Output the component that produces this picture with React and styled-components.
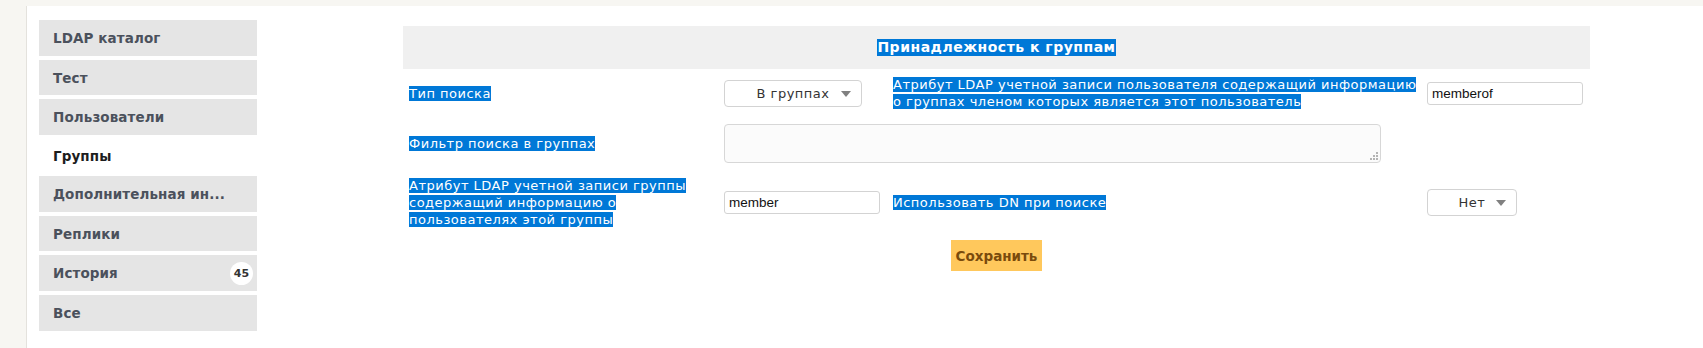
import styled, { createGlobalStyle } from "styled-components";

const GlobalStyle = createGlobalStyle`
  body {
    margin: 0;
    background: #f7f6f2;
    font-family: "DejaVu Sans", Verdana, sans-serif;
  }
`;

const Page = styled.div`
  padding: 6px 0 0 26px;
  min-height: 342px;
`;

const Panel = styled.div`
  display: flex;
  align-items: flex-start;
  background: #fff;
  border-left: 1px solid #e4e2dd;
  min-height: 342px;
  padding: 14px 0 0 12px;
  box-sizing: border-box;
`;

const Sidebar = styled.nav`
  width: 218px;
  display: flex;
  flex-direction: column;
  gap: 4px;
`;

const NavItem = styled.div`
  height: ${(p) => (p.$active ? "33px" : "35.7px")};
  display: flex;
  align-items: center;
  justify-content: space-between;
  padding: 0 4px 0 14px;
  background: ${(p) => (p.$active ? "transparent" : "#e5e5e5")};
  color: ${(p) => (p.$active ? "#1d1d1d" : "#4b515c")};
  font-weight: bold;
  font-size: 13.5px;
  letter-spacing: 0.1px;
  white-space: nowrap;
`;

const Badge = styled.span`
  width: 23px;
  height: 23px;
  border-radius: 50%;
  background: #fff;
  color: #333;
  font-size: 11px;
  font-weight: bold;
  letter-spacing: 0;
  display: flex;
  align-items: center;
  justify-content: center;
`;

const Main = styled.section`
  margin: 6px 0 0 146px;
  width: 1187px;
`;

const Header = styled.div`
  height: 43px;
  background: #f0f0f0;
  display: flex;
  align-items: center;
  justify-content: center;
  font-weight: bold;
  font-size: 14px;
  line-height: 17px;
  letter-spacing: 0.5px;
  color: #fff;
`;

const Form = styled.div`
  display: grid;
  grid-template-columns: 315px 169px 534px 169px;
  align-items: center;
`;

const Cell = styled.div`
  padding: 7px 6px;
  grid-column: ${(p) => p.$span || "auto"};
  display: flex;
  align-items: center;
`;

const Label = styled.span`
  font-size: 13px;
  line-height: 17px;
  letter-spacing: 0.5px;
  color: #fff;
  white-space: nowrap;
`;

const Sel = styled.span`
  background: #0078d7;
`;

const SelectBox = styled.div`
  position: relative;
  width: ${(p) => p.$w}px;
  height: 27px;
  box-sizing: border-box;
  border: 1px solid #d3d3d3;
  border-radius: 4px;
  background: #fff;
  display: flex;
  align-items: center;
  justify-content: center;
  font-size: 13px;
  letter-spacing: 0.5px;
  color: #333;
`;

const Arrow = styled.span`
  position: absolute;
  right: 10px;
  top: 10px;
  width: 0;
  height: 0;
  border-left: 5px solid transparent;
  border-right: 5px solid transparent;
  border-top: 6px solid #808080;
`;

const Input = styled.input`
  width: 156px;
  height: 23px;
  box-sizing: border-box;
  border: 1px solid #d3d3d3;
  border-radius: 3px;
  background: #fff;
  padding: 0 4px;
  font-family: "Liberation Sans", Arial, sans-serif;
  font-size: 13.5px;
  color: #111;
  outline: none;
`;

const AreaWrap = styled.div`
  position: relative;
  width: 657px;
  height: 39px;
`;

const TextArea = styled.textarea`
  display: block;
  width: 100%;
  height: 100%;
  box-sizing: border-box;
  border: 1px solid #d7d7d7;
  border-radius: 4px;
  background: #fbfbfb;
  resize: none;
  outline: none;
`;

const Grip = styled.svg`
  position: absolute;
  right: 3px;
  bottom: 3px;
  width: 9px;
  height: 9px;
`;

const Actions = styled.div`
  display: flex;
  justify-content: center;
  padding-top: 5px;
`;

const SaveButton = styled.button`
  width: 91px;
  height: 31px;
  border: none;
  background: #ffc85c;
  color: #7a4b0c;
  font-family: "DejaVu Sans", Verdana, sans-serif;
  font-weight: bold;
  font-size: 13.5px;
  padding: 0;
`;

const navItems = [
  { title: "LDAP каталог" },
  { title: "Тест" },
  { title: "Пользователи" },
  { title: "Группы", active: true },
  { title: "Дополнительная ин..." },
  { title: "Реплики" },
  { title: "История", badge: 45 },
  { title: "Все" },
];

function Select({ value, width }) {
  return (
    <SelectBox $w={width}>
      {value}
      <Arrow />
    </SelectBox>
  );
}

export default function App() {
  return (
    <Page>
      <GlobalStyle />
      <Panel>
        <Sidebar>
          {navItems.map((item) => (
            <NavItem key={item.title} $active={item.active}>
              <span>{item.title}</span>
              {item.badge && <Badge>{item.badge}</Badge>}
            </NavItem>
          ))}
        </Sidebar>
        <Main>
          <Header>
            <Sel>Принадлежность к группам</Sel>
          </Header>
          <Form>
            <Cell>
              <Label>
                <Sel>Тип поиска</Sel>
              </Label>
            </Cell>
            <Cell>
              <Select value="В группах" width={138} />
            </Cell>
            <Cell>
              <Label>
                <Sel>Атрибут LDAP учетной записи пользователя содержащий информацию </Sel>
                <br />
                <Sel>о группах членом которых является этот пользователь</Sel>
              </Label>
            </Cell>
            <Cell>
              <Input defaultValue="memberof" />
            </Cell>

            <Cell>
              <Label>
                <Sel>Фильтр поиска в группах</Sel>
              </Label>
            </Cell>
            <Cell $span="span 2">
              <AreaWrap>
                <TextArea />
                <Grip viewBox="0 0 9 9">
                  <g fill="#b4b4b4">
                    <rect x="7" y="1" width="2" height="2" />
                    <rect x="4" y="4" width="2" height="2" />
                    <rect x="7" y="4" width="2" height="2" />
                    <rect x="1" y="7" width="2" height="2" />
                    <rect x="4" y="7" width="2" height="2" />
                    <rect x="7" y="7" width="2" height="2" />
                  </g>
                </Grip>
              </AreaWrap>
            </Cell>
            <Cell />

            <Cell>
              <Label>
                <Sel>Атрибут LDAP учетной записи группы </Sel>
                <br />
                <Sel>содержащий информацию о </Sel>
                <br />
                <Sel>пользователях этой группы</Sel>
              </Label>
            </Cell>
            <Cell>
              <Input defaultValue="member" />
            </Cell>
            <Cell>
              <Label>
                <Sel>Использовать DN при поиске</Sel>
              </Label>
            </Cell>
            <Cell>
              <Select value="Нет" width={90} />
            </Cell>
          </Form>
          <Actions>
            <SaveButton>Сохранить</SaveButton>
          </Actions>
        </Main>
      </Panel>
    </Page>
  );
}
